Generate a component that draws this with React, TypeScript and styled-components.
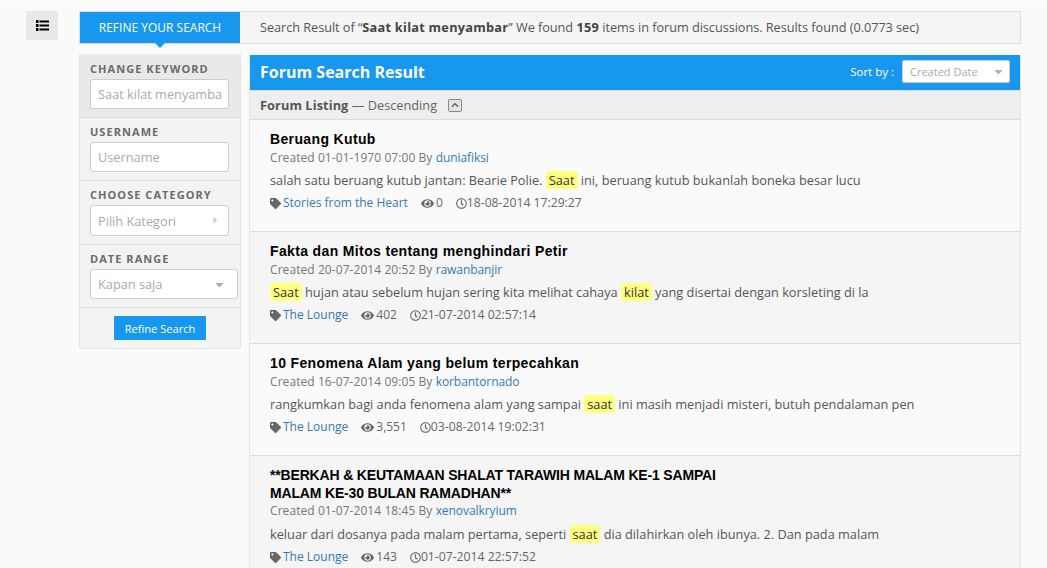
import React from 'react';
import styled, { createGlobalStyle } from 'styled-components';
import { FaTag, FaEye, FaRegClock, FaCaretDown, FaCaretRight, FaChevronUp } from 'react-icons/fa';

interface Post {
  title: string[];
  caps?: boolean;
  created: string;
  author: string;
  excerpt: string;
  category: string;
  views: string;
  updated: string;
}

const posts: Post[] = [
  {
    title: ['Beruang Kutub'],
    created: '01-01-1970 07:00',
    author: 'duniafiksi',
    excerpt: 'salah satu beruang kutub jantan: Bearie Polie. [Saat] ini, beruang kutub bukanlah boneka besar lucu',
    category: 'Stories from the Heart',
    views: '0',
    updated: '18-08-2014 17:29:27',
  },
  {
    title: ['Fakta dan Mitos tentang menghindari Petir'],
    created: '20-07-2014 20:52',
    author: 'rawanbanjir',
    excerpt: '[Saat] hujan atau sebelum hujan sering kita melihat cahaya [kilat] yang disertai dengan korsleting di la',
    category: 'The Lounge',
    views: '402',
    updated: '21-07-2014 02:57:14',
  },
  {
    title: ['10 Fenomena Alam yang belum terpecahkan'],
    created: '16-07-2014 09:05',
    author: 'korbantornado',
    excerpt: 'rangkumkan bagi anda fenomena alam yang sampai [saat] ini masih menjadi misteri, butuh pendalaman pen',
    category: 'The Lounge',
    views: '3,551',
    updated: '03-08-2014 19:02:31',
  },
  {
    title: ['**BERKAH & KEUTAMAAN SHALAT TARAWIH MALAM KE-1 SAMPAI', 'MALAM KE-30 BULAN RAMADHAN**'],
    caps: true,
    created: '01-07-2014 18:45',
    author: 'xenovalkryium',
    excerpt: 'keluar dari dosanya pada malam pertama, seperti [saat] dia dilahirkan oleh ibunya. 2. Dan pada malam',
    category: 'The Lounge',
    views: '143',
    updated: '01-07-2014 22:57:52',
  },
];

// Keywords come wrapped in [] so they can be highlighted
const renderExcerpt = (text: string) =>
  text.split(/(\[[^\]]+\])/).map((part, i) =>
    part.startsWith('[') ? <Mark key={i}>{part.slice(1, -1)}</Mark> : <span key={i}>{part}</span>
  );

const ListIcon = () => (
  <svg width="13" height="11" viewBox="0 0 13 11" fill="#000">
    <rect x="0" y="0" width="2.5" height="3" />
    <rect x="3.5" y="0.5" width="9.5" height="2" />
    <rect x="0" y="4" width="2.5" height="3" />
    <rect x="3.5" y="4.5" width="9.5" height="2" />
    <rect x="0" y="8" width="2.5" height="3" />
    <rect x="3.5" y="8.5" width="9.5" height="2" />
  </svg>
);

export default function App() {
  return (
    <>
      <GlobalStyle />
      <Page>
        <MenuColumn>
          <MenuButton><ListIcon /></MenuButton>
        </MenuColumn>
        <Content>
          <TopBar>
            <RefineTab>REFINE YOUR SEARCH</RefineTab>
            <Summary>
              Search Result of “<b>Saat kilat menyambar</b>” We found <b>159</b> items in forum discussions. Results found (0.0773 sec)
            </Summary>
          </TopBar>
          <Columns>
            <Sidebar>
              <FilterGroup $dark>
                <FilterLabel>CHANGE KEYWORD</FilterLabel>
                <Field>Saat kilat menyamba</Field>
              </FilterGroup>
              <FilterGroup>
                <FilterLabel>USERNAME</FilterLabel>
                <Field>Username</Field>
              </FilterGroup>
              <FilterGroup>
                <FilterLabel>CHOOSE CATEGORY</FilterLabel>
                <Field $tall>Pilih Kategori<FieldIcon $flush><FaCaretRight size={11} /></FieldIcon></Field>
              </FilterGroup>
              <FilterGroup>
                <FilterLabel>DATE RANGE</FilterLabel>
                <Field $wide>Kapan saja<FieldIcon><FaCaretDown size={13} /></FieldIcon></Field>
              </FilterGroup>
              <ButtonRow>
                <RefineButton>Refine Search</RefineButton>
              </ButtonRow>
            </Sidebar>
            <Main>
              <MainHeader>
                <MainTitle>Forum Search Result</MainTitle>
                <SortLabel>Sort by :</SortLabel>
                <SortSelect>Created Date<FieldIcon><FaCaretDown size={13} /></FieldIcon></SortSelect>
              </MainHeader>
              <ListingBar>
                <b>Forum Listing</b>&nbsp;— Descending
                <ToggleButton><FaChevronUp size={8} /></ToggleButton>
              </ListingBar>
              {posts.map((post, i) => (
                <PostItem key={post.author} $alt={i % 2 === 1}>
                  <PostTitle $caps={post.caps}>
                    {post.title.map(line => <div key={line}>{line}</div>)}
                  </PostTitle>
                  <PostMeta $caps={post.caps}>Created {post.created} By <a>{post.author}</a></PostMeta>
                  <Excerpt>{renderExcerpt(post.excerpt)}</Excerpt>
                  <PostFooter>
                    <FootItem $gap={13}>
                      <FaTag size={11} />
                      <a>{post.category}</a>
                    </FootItem>
                    <FootItem $gap={13}>
                      <FaEye size={13} />
                      {post.views}
                    </FootItem>
                    <DateItem>
                      <FaRegClock size={11} />
                      {post.updated}
                    </DateItem>
                  </PostFooter>
                </PostItem>
              ))}
            </Main>
          </Columns>
        </Content>
      </Page>
    </>
  );
}

const GlobalStyle = createGlobalStyle`
  html, body {
    margin: 0;
    height: 100%;
    overflow: hidden;
    background: #fafafa;
    font-family: "Open Sans", sans-serif;
    font-size: 12.75px;
    color: #555;
  }
  a {
    color: #337ab7;
  }
`;

const Page = styled.div`
  display: flex;
  padding-top: 10px;
  border-top: 1px solid #fff;
`;

const MenuColumn = styled.div`
  width: 79px;
  padding-left: 26px;
  box-sizing: border-box;
  flex-shrink: 0;
`;

const MenuButton = styled.div`
  width: 32px;
  height: 29px;
  background: #e9e9e9;
  display: flex;
  align-items: center;
  justify-content: center;
`;

const Content = styled.div`
  width: 942px;
`;

const TopBar = styled.div`
  display: flex;
  height: 33px;
  box-sizing: border-box;
  border: 1px solid #ddd;
  background: #f5f5f5;
`;

const RefineTab = styled.div`
  width: 160px;
  background: #1798ee;
  color: #fff;
  font-size: 12px;
  display: flex;
  align-items: center;
  justify-content: center;
  position: relative;

  &::after {
    content: '';
    position: absolute;
    left: 75px;
    bottom: -5px;
    border-left: 5px solid transparent;
    border-right: 5px solid transparent;
    border-top: 5px solid #1798ee;
  }
`;

const Summary = styled.div`
  padding-left: 20px;
  line-height: 30px;
  color: #555;
  letter-spacing: -0.06px;

  b {
    color: #444;
    letter-spacing: 0.25px;
  }
`;

const Columns = styled.div`
  display: flex;
  align-items: flex-start;
  gap: 8px;
  margin-top: 10px;
`;

const Sidebar = styled.aside`
  width: 162px;
  box-sizing: border-box;
  border: 1px solid #e6e6e6;
  border-top: 0;
  background: #f3f3f3;
  flex-shrink: 0;
`;

const FilterGroup = styled.div<{ $dark?: boolean }>`
  padding: ${p => (p.$dark ? '8px' : '7px')} 10px 8px 10px;
  border-bottom: 1px solid #ddd;
  background: ${p => (p.$dark ? '#e9e9e9' : 'transparent')};
`;

const FilterLabel = styled.div`
  font-size: 11px;
  font-weight: 700;
  letter-spacing: 1.05px;
  color: #6b6b6b;
  line-height: 13px;
  margin-bottom: 4px;
`;

const Field = styled.div<{ $wide?: boolean; $tall?: boolean }>`
  width: ${p => (p.$wide ? '148px' : '139px')};
  height: ${p => (p.$tall ? '31px' : '30px')};
  box-sizing: border-box;
  background: #fff;
  border: 1px solid #ccc;
  border-radius: 3px;
  padding: 0 7px;
  color: #aaa;
  display: flex;
  align-items: center;
  justify-content: space-between;
  overflow: hidden;
  white-space: nowrap;
`;

const FieldIcon = styled.span<{ $flush?: boolean }>`
  color: ${p => (p.$flush ? '#ccc' : '#b0b0b0')};
  display: flex;
  align-items: center;
  margin-right: ${p => (p.$flush ? 0 : 4)}px;
`;

const ButtonRow = styled.div`
  display: flex;
  justify-content: center;
  padding: 8px 0 8px 0;
`;

const RefineButton = styled.button`
  width: 92px;
  height: 24px;
  border: 0;
  padding: 0;
  background: #1798ee;
  color: #fff;
  font-family: inherit;
  font-size: 11.1px;
`;

const Main = styled.main`
  width: 772px;
  box-sizing: border-box;
  border-left: 1px solid #e6e6e6;
  border-right: 1px solid #e6e6e6;
  margin-top: 1px;
`;

const MainHeader = styled.header`
  height: 36px;
  box-sizing: border-box;
  background: #1798ee;
  color: #fff;
  display: flex;
  align-items: center;
  padding: 0 10px 2px 10px;
  border-bottom: 1px solid #ddd;
`;

const MainTitle = styled.h1`
  flex: 1;
  margin: 0;
  font-size: 16px;
  font-weight: 700;
`;

const SortLabel = styled.span`
  font-size: 11.5px;
  margin-right: 8px;
`;

const SortSelect = styled.div`
  width: 108px;
  height: 23px;
  box-sizing: border-box;
  background: #fff;
  border: 1px solid #ccc;
  border-radius: 2px;
  padding: 0 0 0 7px;
  color: #aaa;
  font-size: 11px;
  display: flex;
  align-items: center;
  justify-content: space-between;
`;

const ListingBar = styled.div`
  height: 29px;
  box-sizing: border-box;
  background: #eee;
  border-bottom: 1px solid #ddd;
  display: flex;
  align-items: center;
  padding-left: 10px;
  color: #666;

  b {
    color: #555;
    letter-spacing: 0.08px;
  }
`;

const ToggleButton = styled.span`
  width: 12px;
  height: 11px;
  margin-left: 11px;
  border: 1px solid #888;
  border-radius: 2px;
  background: #e4e4e4;
  display: flex;
  align-items: center;
  justify-content: center;
  color: #555;
`;

const PostItem = styled.article<{ $alt: boolean }>`
  height: 112px;
  box-sizing: border-box;
  padding: 10px 20px 0 20px;
  background: ${p => (p.$alt ? '#f5f5f5' : '#fafafa')};
  border-bottom: 1px solid #ddd;

  &:last-child {
    height: auto;
    padding-bottom: 20px;
  }
`;

const PostTitle = styled.h2<{ $caps?: boolean }>`
  margin: 0;
  font-family: "Liberation Sans", Arial, sans-serif;
  font-size: 14px;
  line-height: 18px;
  font-weight: 700;
  letter-spacing: ${p => (p.$caps ? '-0.17px' : '0.36px')};
  color: #000;
`;

const PostMeta = styled.div<{ $caps?: boolean }>`
  padding: ${p => (p.$caps ? '0 0 1px' : '1px 0 0')};
  font-size: 12px;
  line-height: 18px;
  letter-spacing: 0.07px;
  color: #777;

  a {
    letter-spacing: -0.07px;
  }
`;

const Excerpt = styled.p`
  margin: 4px 0 0 0;
  line-height: 18px;
  color: #555;
  white-space: nowrap;
`;

const Mark = styled.span`
  background: #ffff80;
  border-radius: 3px;
  padding: 0 3px;
  color: #333;
`;

const PostFooter = styled.div`
  display: flex;
  margin-top: 5px;
  line-height: 18px;
  font-size: 12px;
  color: #666;
`;

const FootItem = styled.span<{ $gap?: number }>`
  display: inline-flex;
  align-items: center;
  gap: 2px;
  margin-right: ${p => p.$gap ?? 0}px;

  svg {
    color: #666;
  }
`;

const DateItem = styled.span`
  display: inline-flex;
  align-items: center;
  font-size: 12.2px;

  svg {
    color: #666;
  }
`;
